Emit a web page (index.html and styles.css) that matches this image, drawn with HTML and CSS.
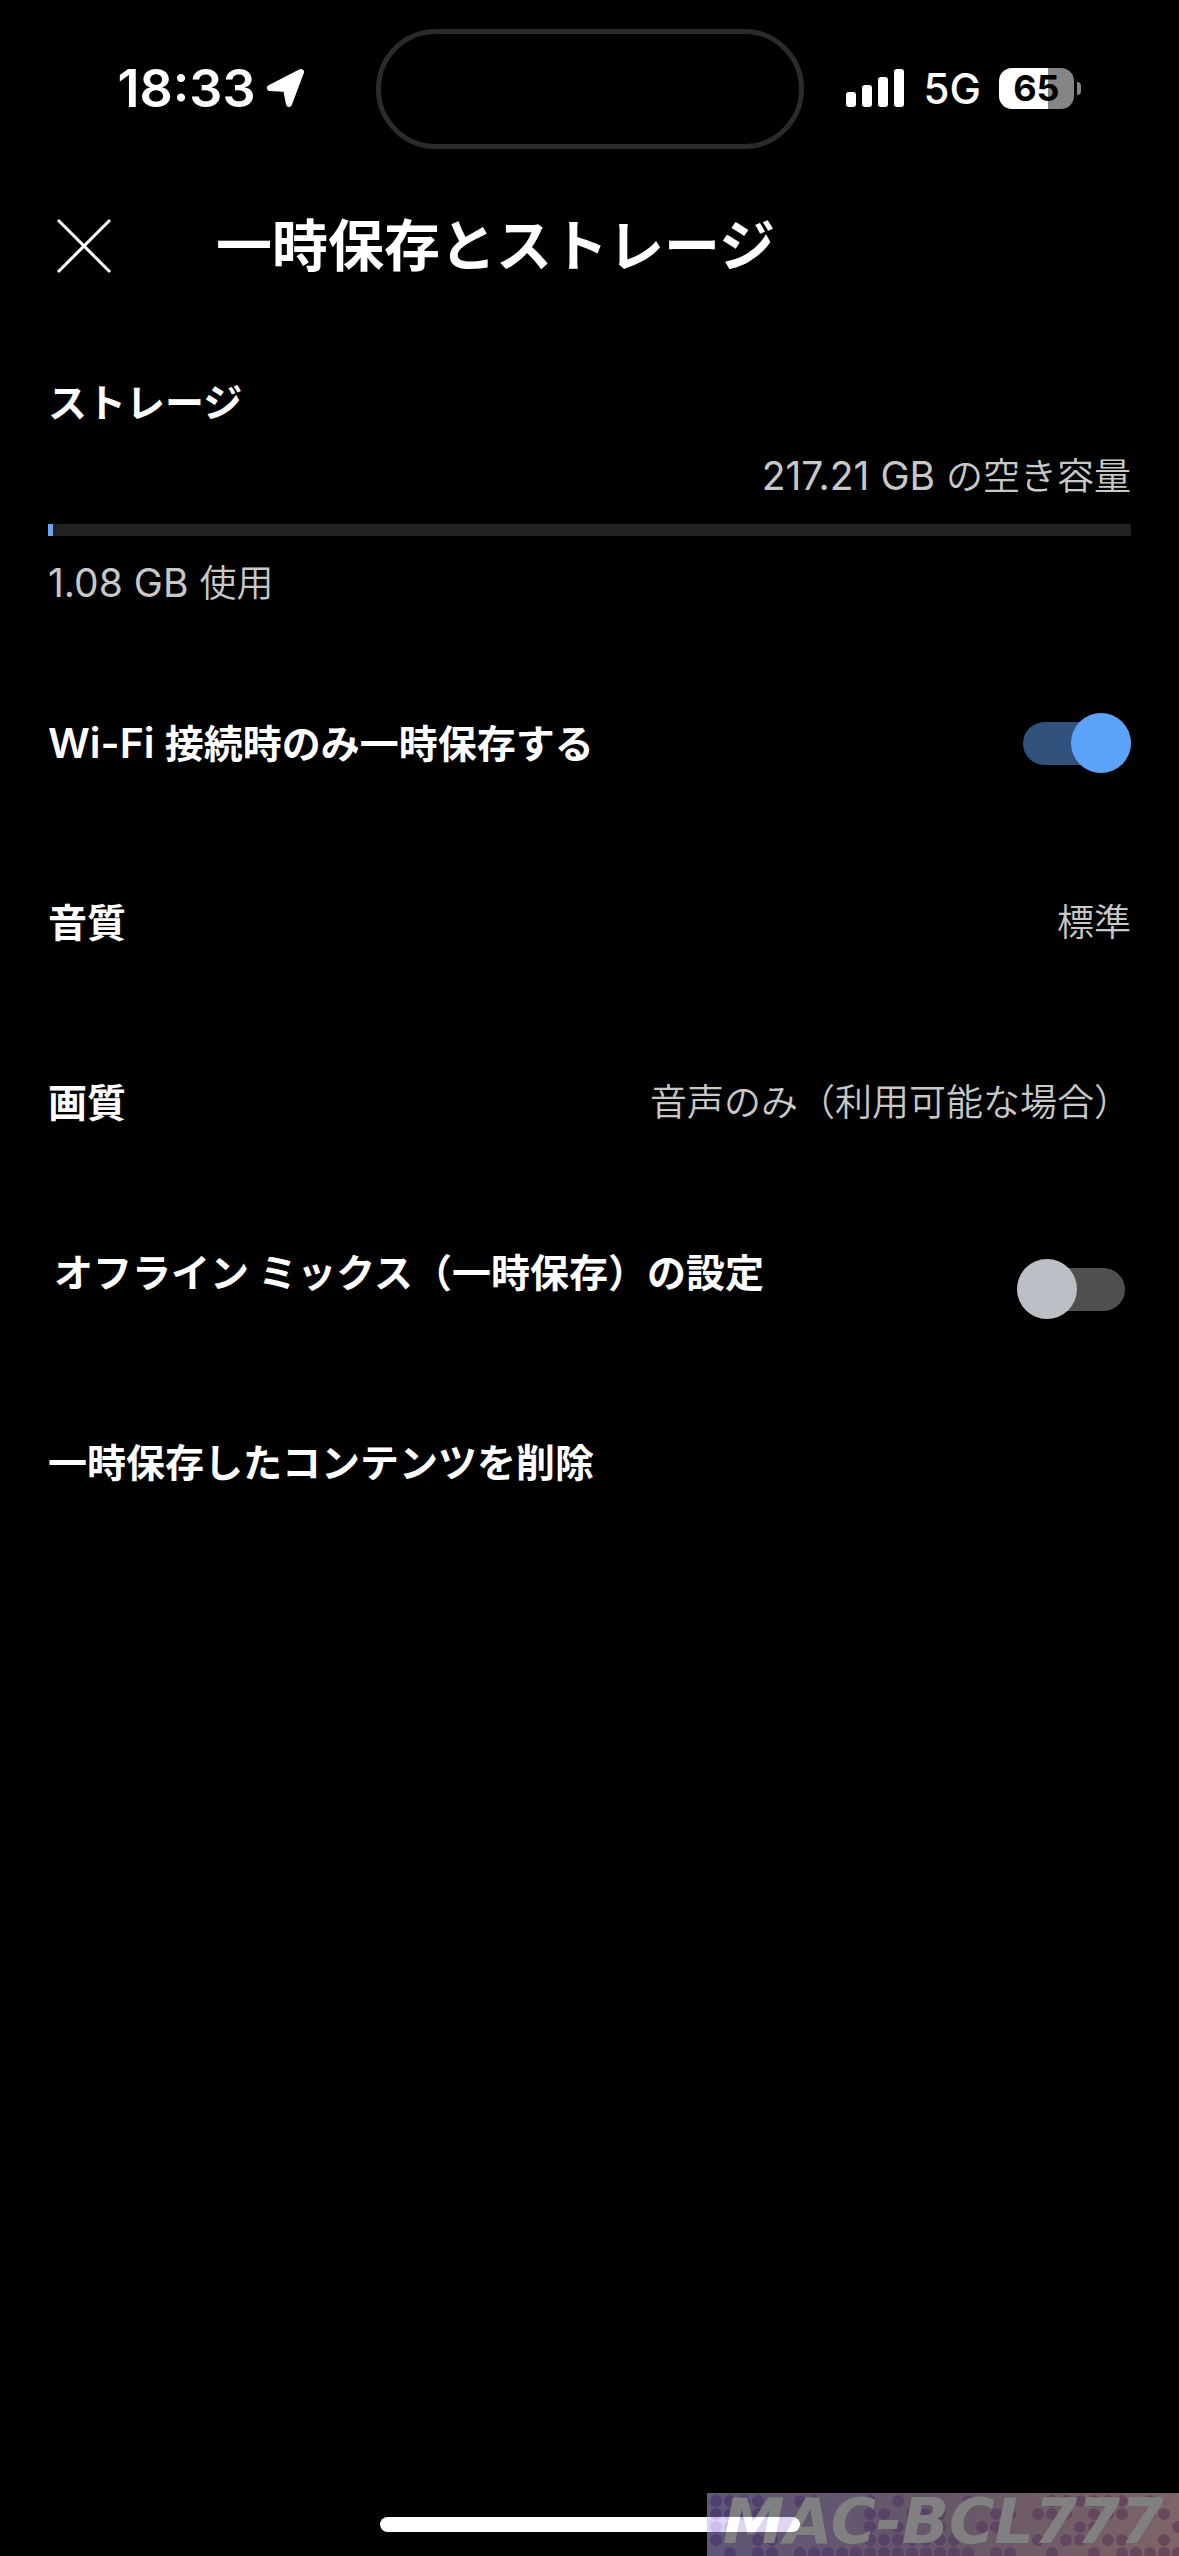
FILE: index.html
```html
<!DOCTYPE html>
<html lang="ja">

<head>
    <meta charset="UTF-8">
    <meta name="viewport" content="width=device-width, initial-scale=1.0">
    <title>一時保存とストレージ</title>
    <link rel="stylesheet" href="styles.css">
</head>

<body>
    <div class="status">
        <div class="status-left">
            <span class="time">18:33</span>
            <svg class="location" viewBox="0 0 40 40" width="40" height="40">
                <path d="M35 4 L4 20 L20 21 L23 36 Z" fill="#fff" stroke="#fff" stroke-width="6" stroke-linejoin="round" />
            </svg>
        </div>
        <div class="island"></div>
        <div class="status-right">
            <svg class="signal" viewBox="0 0 60 38" width="60" height="38" fill="#fff">
                <rect x="0" y="23" width="10" height="15" rx="3" />
                <rect x="16" y="16" width="10" height="22" rx="3" />
                <rect x="32" y="8" width="10" height="30" rx="3" />
                <rect x="48" y="0" width="10" height="38" rx="3" />
            </svg>
            <span class="network">5G</span>
            <div class="battery"><span>65</span></div>
        </div>
    </div>

    <header class="header">
        <button class="close" type="button" aria-label="閉じる">
            <svg viewBox="0 0 60 60" width="60" height="60" stroke="#fff" stroke-width="3">
                <path d="M4 4 L56 56 M56 4 L4 56" />
            </svg>
        </button>
        <h1>一時保存とストレージ</h1>
    </header>

    <main>
        <section class="storage">
            <h2 class="label">ストレージ</h2>
            <p class="value free"><span class="latin">217.21 GB </span>の空き容量</p>
            <div class="meter">
                <div class="used" style="width: 0.5%"></div>
            </div>
            <p class="value"><span class="latin">1.08 GB </span>使用</p>
        </section>

        <ul class="settings">
            <li>
                <label class="label" for="wifi"><span class="latin">Wi-Fi </span>接続時のみ一時保存する</label>
                <input class="toggle" type="checkbox" id="wifi" checked>
            </li>
            <li>
                <span class="label">音質</span>
                <span class="value">標準</span>
            </li>
            <li>
                <span class="label">画質</span>
                <span class="value">音声のみ（利用可能な場合）</span>
            </li>
            <li class="mix">
                <label class="label" for="mix">オフライン ミックス（一時保存）の設定</label>
                <input class="toggle" type="checkbox" id="mix">
            </li>
            <li>
                <button class="label" type="button">一時保存したコンテンツを削除</button>
            </li>
        </ul>
    </main>

    <footer class="footer">
        <div class="home"></div>
    </footer>

    <div class="watermark">
        <svg viewBox="0 0 472 63" width="472" height="63">
            <defs>
                <linearGradient id="dot" gradientUnits="userSpaceOnUse" x1="0" y1="0" x2="472" y2="0">
                    <stop offset="0" stop-color="#9c7ce0" />
                    <stop offset="1" stop-color="#d290b4" />
                </linearGradient>
            </defs>
            <!-- 長さ0の破線 + round で水玉にする -->
            <g fill="none" stroke="url(#dot)" stroke-width="12" stroke-linecap="round" stroke-dasharray="0 14">
                <path d="M9 8h43 M93 8h15 M163 8h1 M191 8h1 M261 8h1 M345 8h71 M443 8h1" />
                <path d="M9 21h43 M163 21h15 M205 21h29 M289 21h15 M331 21h29 M387 21h29 M443 21h15" />
                <path d="M9 34h15 M163 34h1 M191 34h1 M233 34h1 M275 34h15 M373 34h15 M471 34h1" />
                <path d="M9 47h1 M51 47h15 M163 47h71 M247 47h1 M331 47h1 M359 47h15 M401 47h15 M457 47h1" />
                <path d="M23 60h1 M51 60h15 M93 60h169 M289 60h15 M345 60h1 M387 60h1 M415 60h57" />
            </g>
        </svg>
        <span>MAC-BCL777</span>
    </div>
</body>

</html>
```

FILE: styles.css
```css
* {
    margin: 0;
    padding: 0;
    box-sizing: border-box;
}

body {
    position: relative;
    display: flex;
    flex-direction: column;
    min-height: 100vh;
    background: #000;
    color: #fff;
    font-family: "Inter", "Noto Sans CJK JP", sans-serif;
}

button {
    border: 0;
    background: none;
    color: inherit;
    font-family: inherit;
    cursor: pointer;
}

svg {
    display: block;
}

/* ステータスバー */
.status {
    display: grid;
    grid-template-columns: 1fr 428px 1fr;
    align-items: center;
    padding-top: 29px;
}

.status-left {
    display: flex;
    align-items: center;
    justify-content: flex-end;
    gap: 10px;
    padding: 0 70px 2px 0;
}

.time {
    font-size: 52px;
    font-weight: 600;
}

.island {
    height: 120px;
    border: 5px solid #2b2b2b;
    border-radius: 60px;
}

.status-right {
    display: flex;
    align-items: center;
    padding: 0 0 2px 42px;
}

.network {
    margin: 0 18px;
    font-size: 42px;
    font-weight: 500;
}

.battery {
    position: relative;
    width: 75px;
    height: 41px;
    border-radius: 13px;
    background: linear-gradient(to right, #fff 65%, #858585 65%);
    color: #000;
    font-size: 36px;
    font-weight: 700;
    line-height: 41px;
    text-align: center;
}

.battery::after {
    content: "";
    position: absolute;
    top: 14px;
    right: -7px;
    width: 4px;
    height: 13px;
    border-radius: 0 4px 4px 0;
    background: #858585;
}

/* ヘッダー */
.header {
    display: flex;
    align-items: center;
    gap: 102px;
    height: 194px;
    padding: 0 54px;
}

.header h1 {
    font-size: 56px;
    font-weight: 700;
    line-height: 64px;
}

/* 共通の文字 */
.label {
    font-size: 39px;
    font-weight: 700;
    line-height: 56px;
}

.label .latin {
    font-size: 41px;
    font-weight: 600;
    white-space: pre;
}

.value {
    color: #c8c8c8;
    font-size: 37px;
    font-weight: 350;
    line-height: 48px;
}

.value .latin {
    font-size: 39px;
    font-weight: 400;
    white-space: pre;
}

/* ストレージ */
.storage {
    padding: 32px 48px 45px;
}

.free {
    margin-top: 21px;
    text-align: right;
}

.meter {
    height: 12px;
    margin: 23px 0;
    background: #212121;
}

.used {
    height: 100%;
    background: #6ba6ee;
}

/* 設定リスト */
.settings {
    list-style: none;
}

.settings li {
    display: flex;
    align-items: center;
    justify-content: space-between;
    height: 180px;
    padding: 0 48px;
}

.settings .mix {
    align-items: flex-start;
    padding: 52px 54px 0;
}

.mix .toggle {
    margin-top: 14px;
}

.toggle {
    position: relative;
    width: 108px;
    height: 60px;
    appearance: none;
    cursor: pointer;
}

.toggle::before {
    content: "";
    position: absolute;
    inset: 9px 0 8px;
    border-radius: 22px;
    background: #4f4f4f;
}

.toggle::after {
    content: "";
    position: absolute;
    top: 0;
    left: 0;
    width: 60px;
    height: 60px;
    border-radius: 50%;
    background: #bcbfc5;
}

.toggle:checked::before {
    background: #30527c;
}

.toggle:checked::after {
    left: auto;
    right: 0;
    background: #5ca2f8;
}

/* ホームバー */
.footer {
    display: flex;
    justify-content: center;
    margin-top: auto;
    padding: 24px 0;
}

.home {
    width: 420px;
    height: 15px;
    border-radius: 8px;
    background: #fff;
}

/* 右下のロゴ */
.watermark {
    position: absolute;
    right: 0;
    bottom: 0;
    display: grid;
    width: 472px;
    height: 63px;
    background: linear-gradient(to right, #c0acec, #ccaed0 50%, #fac8cc);
    opacity: 0.5;
}

.watermark svg,
.watermark span {
    grid-area: 1 / 1;
}

.watermark span {
    color: #fff;
    font-family: "DejaVu Sans", sans-serif;
    font-size: 62px;
    font-style: italic;
    font-weight: 700;
    line-height: 58px;
    text-align: center;
}
```
